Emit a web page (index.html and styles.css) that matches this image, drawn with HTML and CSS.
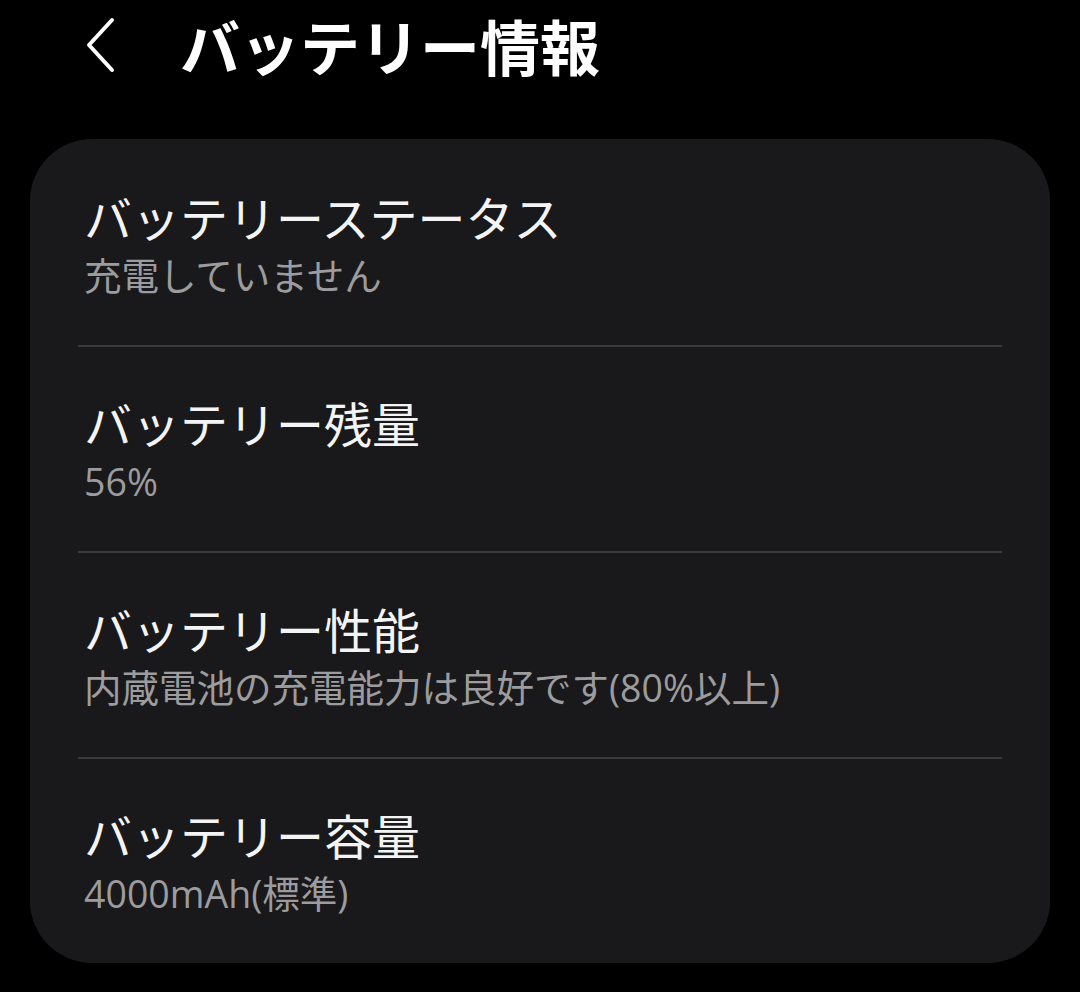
FILE: index.html
```html
<!DOCTYPE html>
<html lang="ja">
<head>
    <meta charset="UTF-8">
    <meta name="viewport" content="width=device-width, initial-scale=1.0">
    <title>バッテリー情報</title>
    <link rel="stylesheet" href="styles.css">
</head>
<body>

<div class="header">
    <button class="back-button" aria-label="戻る">
        <svg width="40" height="60" viewBox="0 0 40 60">
            <polyline points="28,6 5,31 28,56" fill="none" stroke="#fff" stroke-width="4" stroke-linecap="round" stroke-linejoin="round"/>
        </svg>
    </button>
    <h1>バッテリー情報</h1>
</div>

<div class="card">
    <div class="item">
        <div class="item-title">バッテリーステータス</div>
        <div class="item-sub">充電していません</div>
    </div>
    <div class="item">
        <div class="item-title">バッテリー残量</div>
        <div class="item-sub">56%</div>
    </div>
    <div class="item">
        <div class="item-title">バッテリー性能</div>
        <div class="item-sub">内蔵電池の充電能力は良好です(80%以上)</div>
    </div>
    <div class="item">
        <div class="item-title">バッテリー容量</div>
        <div class="item-sub">4000mAh(標準)</div>
    </div>
</div>

</body>
</html>
```

FILE: styles.css
```css
html, body { margin: 0; background: #000; }
body { font-family: "Noto Sans CJK JP", "Noto Sans", sans-serif; color: #f4f4f4; width: 1080px; height: 992px; overflow: hidden; }
.header { display: flex; align-items: center; height: 96px; padding-left: 84px; }
.back-button { background: none; border: none; padding: 0; width: 40px; height: 60px; margin-top: -8px; cursor: pointer; }
.back-button svg { display: block; }
.header h1 { margin: -6px 0 0 56px; font-size: 60px; font-weight: 700; color: #fff; line-height: 1; }
.card { margin: 43px 30px 0; background: #19191b; border-radius: 62px; padding: 0 48px; }
.item { padding: 49px 0 45px 6px; }
.item + .item { border-top: 2px solid #3a3a3c; padding-top: 47px; }
.item-title { font-size: 48px; line-height: 56px; }
.item-sub { font-family: "Open Sans", "Noto Sans CJK JP", sans-serif; font-size: 37.5px; line-height: 48px; margin-top: 8px; color: #9c9c9e; }
```
